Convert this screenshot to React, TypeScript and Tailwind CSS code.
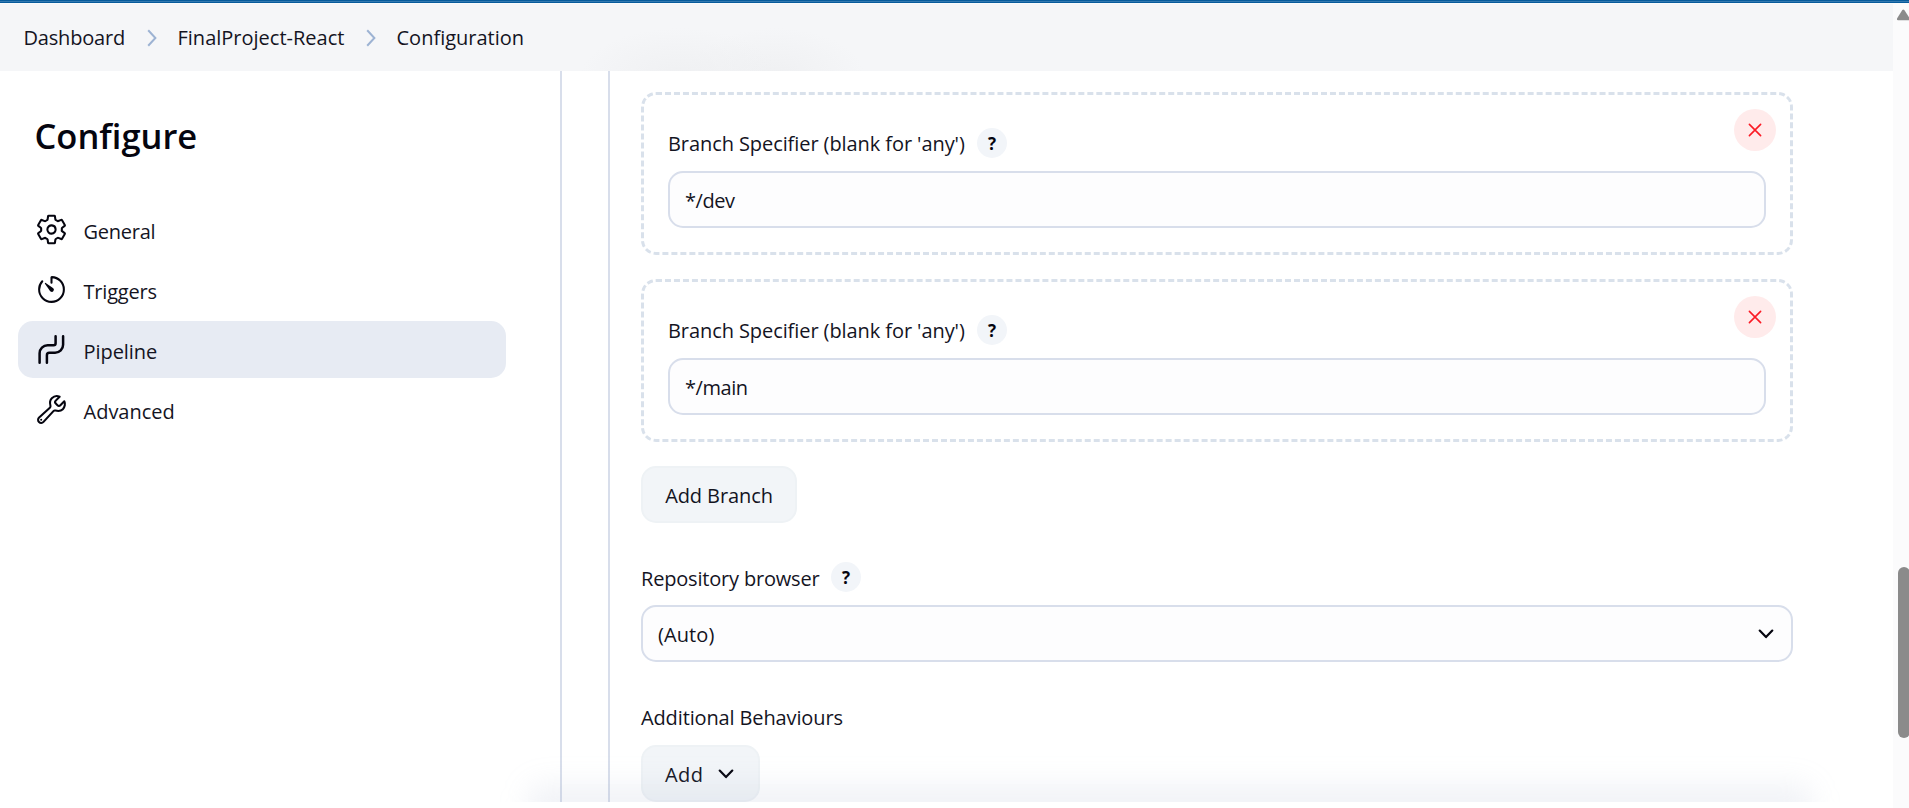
import type { ReactNode } from "react";
import { IoBuildOutline, IoSettingsOutline, IoTimerOutline } from "react-icons/io5";

function PipelineIcon() {
  return (
    <svg width="33" height="33" viewBox="0 0 33 33" fill="none" stroke="#05050f" strokeWidth="2.5" strokeLinecap="round">
      <path d="M4.6 29.8V20.2a8 8 0 0 1 8-8h6a2 2 0 0 0 2-2V3.2" />
      <path d="M11.9 29.8v-7.6a2.4 2.4 0 0 1 2.4-2.4h5.8a8 8 0 0 0 8-8V3.2" />
    </svg>
  );
}

function Separator() {
  return (
    <svg width="10" height="18" viewBox="0 0 10 18" fill="none" stroke="#9db3d3" strokeWidth="2" className="shrink-0">
      <path d="M1.2 1.2 8.4 9l-7.2 7.8" />
    </svg>
  );
}

function Chevron() {
  return (
    <svg width="16" height="10" viewBox="0 0 16 10" fill="none" stroke="#05050f" strokeWidth="2.2" strokeLinecap="round" strokeLinejoin="round">
      <path d="m1.7 1.6 6.3 6.5 6.3-6.5" />
    </svg>
  );
}

function NavItem({ icon, children, active }: { icon: ReactNode; children: ReactNode; active?: boolean }) {
  return (
    <a className={`flex h-[57px] items-center gap-[15.5px] rounded-[15px] pl-[17px] ${active ? "bg-[#e7ebf3]" : ""}`}>
      {icon}
      <span className="mt-1">{children}</span>
    </a>
  );
}

function Help() {
  return (
    <button className="grid size-[30px] place-items-center rounded-full bg-[#f2f5f9] text-[17px] leading-none font-bold text-[#05050f]">
      ?
    </button>
  );
}

function Branch({ children }: { children: ReactNode }) {
  return (
    <section className="relative h-[163px] rounded-[15px] border-3 border-dashed border-[#d9e1eb] pt-[33px] pr-[24px] pl-[24px]">
      <div className="flex h-[30px] items-center gap-[11px]">
        <label className="w-[298px] pt-px tracking-[-0.08px] whitespace-nowrap">Branch Specifier (blank for 'any')</label>
        <Help />
      </div>
      <div className="mt-[13px] flex h-[57px] items-center rounded-[15px] border-2 border-[#d8deeb] bg-[#fdfdfe] pt-[2px] pl-[15px]">
        {children}
      </div>
      <button className="absolute top-[14px] right-[14px] grid size-[42px] place-items-center rounded-full bg-[#ffebeb] text-[#fb1a24]">
        <svg width="14" height="14" viewBox="0 0 14 14" stroke="currentColor" strokeWidth="1.6" strokeLinecap="round">
          <path d="m1.4 1.4 11.2 11.2M12.6 1.4 1.4 12.6" />
        </svg>
      </button>
    </section>
  );
}

export default function App() {
  return (
    <div className="flex h-[808px] w-[1909px] flex-col overflow-hidden bg-white font-['Open_Sans',sans-serif] text-[20px] leading-[28px] text-[#14141f]">
      <div className="h-[3px] shrink-0 bg-[linear-gradient(#065b9c_0_1px,#3479af_1px_2px,#065b9c_2px_3px)]" />
      <div className="flex min-h-0 flex-1">
        <div className="relative flex w-[1893px] flex-col">
          <header className="flex h-[68px] shrink-0 items-center border-t border-[#fafbfc] bg-[#f5f6f8] bg-[radial-gradient(ellipse_100px_48px_at_680px_72px,#eff0f2_0%,#f3f4f600_100%),radial-gradient(ellipse_90px_48px_at_775px_72px,#eff0f2_0%,#f3f4f600_100%)] pl-[23.5px]">
            <span className="w-[123px] tracking-[-0.19px]">Dashboard</span>
            <Separator />
            <span className="ml-[21px] w-[188px]">FinalProject-React</span>
            <Separator />
            <span className="ml-[21px]">Configuration</span>
          </header>

          <div className="flex h-[731px] overflow-hidden">
            <aside className="w-[560px] pl-[18px]">
              <h1 className="mt-[41px] pl-[16.5px] text-[34.5px] leading-[48px] font-semibold text-[#05050f]">Configure</h1>
              <nav className="mt-[41px] flex w-[488px] flex-col gap-[3px]">
                <NavItem icon={<IoSettingsOutline size={33} className="text-[#05050f]" />}>
                  <span className="tracking-[-0.25px]">General</span>
                </NavItem>
                <NavItem icon={<IoTimerOutline size={33} className="text-[#05050f]" />}>
                  <span className="tracking-[-0.2px]">Triggers</span>
                </NavItem>
                <NavItem icon={<PipelineIcon />} active>
                  <span className="tracking-[-0.05px]">Pipeline</span>
                </NavItem>
                <NavItem icon={<IoBuildOutline size={33} className="text-[#05050f]" />}>Advanced</NavItem>
              </nav>
            </aside>

            <main className="w-[1333px] border-l-2 border-[#d8deeb] pl-[46px]">
              <div className="h-full border-l-2 border-[#d8deeb] pt-[21px] pr-[100px] pl-[31px]">
                <div className="flex flex-col gap-6">
                  <Branch>
                    <span className="tracking-[-0.45px]">*/dev</span>
                  </Branch>
                  <Branch>
                    <span className="tracking-[-0.45px]">*/main</span>
                  </Branch>
                </div>
                <button className="mt-6 flex h-[57px] w-[156px] items-center justify-center rounded-[15px] border-2 border-[#eef2f5] bg-[#f2f5f8] pt-[2px] tracking-[-0.1px]">
                  Add Branch
                </button>

                <div className="mt-[39px] flex h-[30px] items-center">
                  <label className="w-[190px] pt-[3px] tracking-[-0.19px]">Repository browser</label>
                  <Help />
                </div>
                <div className="mt-[13px] flex h-[57px] items-center justify-between rounded-[15px] border-2 border-[#d8deeb] bg-[#fdfdfe] pr-[17px] pl-[15px]">
                  <span className="pt-[3px] tracking-[0.1px]">(Auto)</span>
                  <Chevron />
                </div>

                <p className="mt-[42px] tracking-[-0.13px]">Additional Behaviours</p>
                <button className="mt-[13px] flex h-[57px] w-[119px] items-center gap-[14.5px] rounded-[15px] border-2 border-[#eef2f5] bg-[#f2f5f8] pl-[22px]">
                  <span className="pt-[2px] tracking-[0.4px]">Add</span>
                  <Chevron />
                </button>
              </div>
            </main>
          </div>

          <div className="pointer-events-none absolute bottom-[6px] left-[490px] h-[60px] w-[1360px] overflow-hidden px-[38px] pt-[42px]">
            <div className="h-[80px] rounded-[15px] bg-[#a0b0cc]/15 blur-[14px]" />
          </div>
        </div>

        <div className="flex w-[16px] flex-col bg-[#fbfbfc] pl-[4px]">
          <svg width="12" height="12" viewBox="0 0 12 12" className="mt-[6px]" fill="#8b8b8b">
            <path d="M5.3 1.1q1-1.4 2 0l5.4 8.1q.8 2-1 2H1q-1.800 0-.8-2z" />
          </svg>
          <div className="mt-[546px] ml-px h-[171px] w-[12px] rounded-full bg-[#8b8b8b]" />
        </div>
      </div>
    </div>
  );
}
